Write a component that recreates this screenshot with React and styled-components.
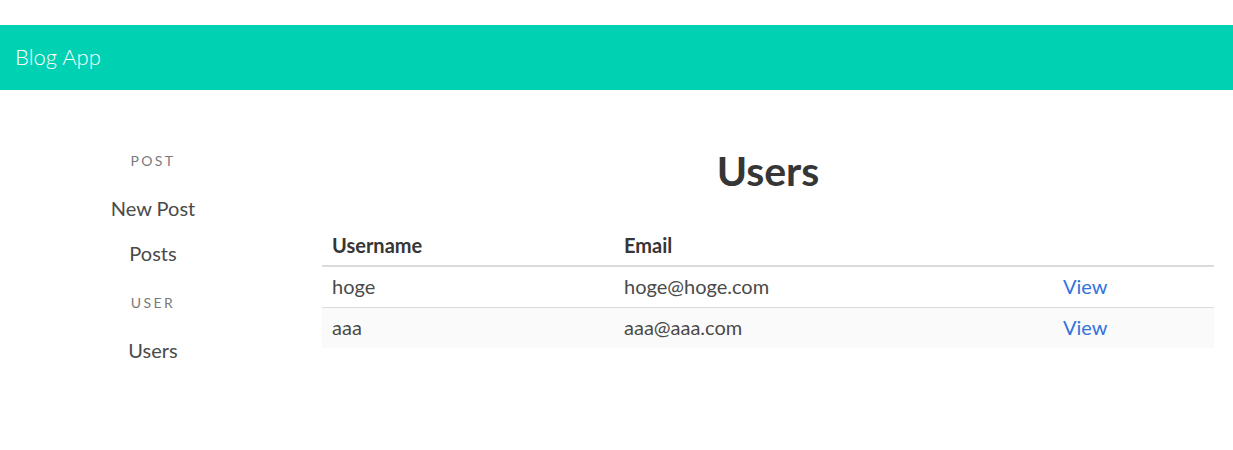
import React from "react"
import styled, {createGlobalStyle} from "styled-components"

const GlobalStyle = createGlobalStyle`
    body {
        margin: 0;
        background: #fff;
        font-family: Lato, "Open Sans", sans-serif;
        color: #4a4a4a;
    }
`;

const Page = styled.div`
    padding-top: 25px;
`;

const NavBar = styled.nav`
    height: 65px;
    background-color: #00d1b2;
    display: flex;
    align-items: center;
    padding-left: 15px;
`;

const Brand = styled.a`
    color: #fff;
    font-size: 22px;
    font-weight: 300;
    text-decoration: none;
    margin-top: -2px;
`;

const Body = styled.div`
    display: flex;
    padding-top: 59px;
`;

const Side = styled.aside`
    width: 306px;
    flex: 0 0 306px;
    display: flex;
    flex-direction: column;
    align-items: center;
`;

const SideLabel = styled.p`
    margin: 16px 0 14px;
    font-size: 14px;
    letter-spacing: 2.4px;
    text-transform: uppercase;
    color: #7a7a7a;
    line-height: 20px;
    &:first-child {
        margin-top: 2px;
        margin-bottom: 16px;
    }
`;

const SideLink = styled.a`
    font-size: 20px;
    font-weight: 400;
    color: #4a4a4a;
    line-height: 24px;
    padding: 9px 0 12px;
    text-decoration: none;
    &:last-child {
        margin-top: 2px;
    }
`;

const Main = styled.main`
    flex: 1;
    padding: 0 19px 0 16px;
`;

const Title = styled.h1`
    margin: 0 0 33px;
    text-align: center;
    font-size: 41px;
    font-weight: 700;
    color: #363636;
    line-height: 44px;
`;

const Table = styled.table`
    width: 100%;
    table-layout: fixed;
    border-collapse: collapse;
    font-size: 20px;
`;

const Th = styled.th`
    text-align: left;
    font-weight: 700;
    color: #363636;
    padding: 7px 10px 8px;
    line-height: 24px;
    border-bottom: 2px solid #dbdbdb;
    width: ${props => props.w || "auto"};
`;

const Tr = styled.tr`
    background: ${props => props.$striped ? "#fafafa" : "#fff"};
    &:not(:last-child) td {
        border-bottom: 1px solid #dbdbdb;
    }
`;

const Td = styled.td`
    padding: 7px 10px 9px;
    line-height: 24px;
    color: #4a4a4a;
`;

const ViewLink = styled.a`
    color: #3273dc;
    text-decoration: none;
`;

const users = [
    {name: "hoge", email: "hoge@hoge.com"},
    {name: "aaa", email: "aaa@aaa.com"},
];

export default function App() {
    return (
        <Page>
            <GlobalStyle />
            <NavBar>
                <Brand href="#">Blog App</Brand>
            </NavBar>
            <Body>
                <Side>
                    <SideLabel>Post</SideLabel>
                    <SideLink href="#">New Post</SideLink>
                    <SideLink href="#">Posts</SideLink>
                    <SideLabel>User</SideLabel>
                    <SideLink href="#">Users</SideLink>
                </Side>
                <Main>
                    <Title>Users</Title>
                    <Table>
                        <thead>
                            <tr>
                                <Th w="272px">Username</Th>
                                <Th w="419px">Email</Th>
                                <Th></Th>
                            </tr>
                        </thead>
                        <tbody>
                            {users.map((u, i) => (
                                <Tr key={u.name} $striped={i % 2 === 1}>
                                    <Td>{u.name}</Td>
                                    <Td>{u.email}</Td>
                                    <Td><ViewLink href="#">View</ViewLink></Td>
                                </Tr>
                            ))}
                        </tbody>
                    </Table>
                </Main>
            </Body>
        </Page>
    );
}
